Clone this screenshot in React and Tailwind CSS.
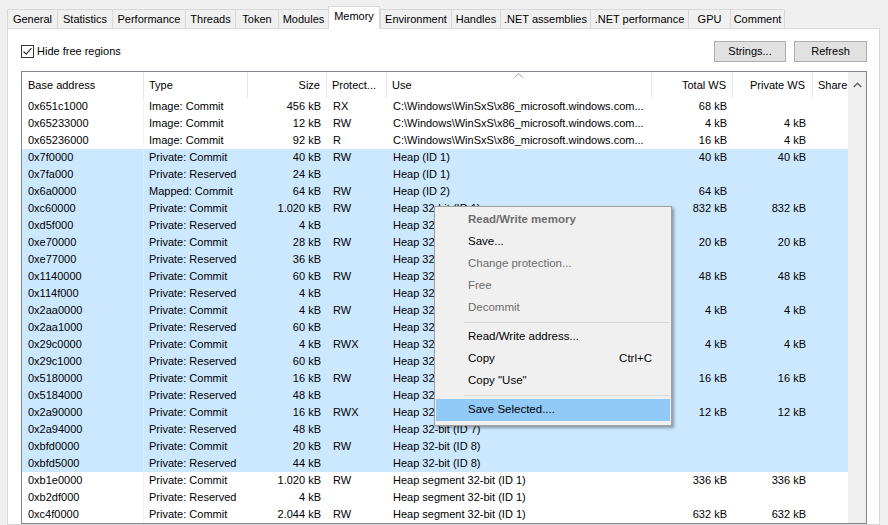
import React from 'react';

const tabs = [
  ['General', 50], ['Statistics', 55], ['Performance', 73], ['Threads', 50], ['Token', 43],
  ['Modules', 50], ['Memory', 52], ['Environment', 71], ['Handles', 49], ['.NET assemblies', 90],
  ['.NET performance', 98], ['GPU', 42], ['Comment', 55],
];

const winsxs = 'C:\\Windows\\WinSxS\\x86_microsoft.windows.com...';

// address, type, size, protection, use, total ws, private ws
const rows = [
  ['0x651c1000', 'Image: Commit', '456 kB', 'RX', winsxs, '68 kB', ''],
  ['0x65233000', 'Image: Commit', '12 kB', 'RW', winsxs, '4 kB', '4 kB'],
  ['0x65236000', 'Image: Commit', '92 kB', 'R', winsxs, '16 kB', '4 kB'],
  ['0x7f0000', 'Private: Commit', '40 kB', 'RW', 'Heap (ID 1)', '40 kB', '40 kB'],
  ['0x7fa000', 'Private: Reserved', '24 kB', '', 'Heap (ID 1)', '', ''],
  ['0x6a0000', 'Mapped: Commit', '64 kB', 'RW', 'Heap (ID 2)', '64 kB', ''],
  ['0xc60000', 'Private: Commit', '1.020 kB', 'RW', 'Heap 32-bit (ID 1)', '832 kB', '832 kB'],
  ['0xd5f000', 'Private: Reserved', '4 kB', '', 'Heap 32-bit (ID 1)', '', ''],
  ['0xe70000', 'Private: Commit', '28 kB', 'RW', 'Heap 32-bit (ID 2)', '20 kB', '20 kB'],
  ['0xe77000', 'Private: Reserved', '36 kB', '', 'Heap 32-bit (ID 2)', '', ''],
  ['0x1140000', 'Private: Commit', '60 kB', 'RW', 'Heap 32-bit (ID 3)', '48 kB', '48 kB'],
  ['0x114f000', 'Private: Reserved', '4 kB', '', 'Heap 32-bit (ID 3)', '', ''],
  ['0x2aa0000', 'Private: Commit', '4 kB', 'RW', 'Heap 32-bit (ID 4)', '4 kB', '4 kB'],
  ['0x2aa1000', 'Private: Reserved', '60 kB', '', 'Heap 32-bit (ID 4)', '', ''],
  ['0x29c0000', 'Private: Commit', '4 kB', 'RWX', 'Heap 32-bit (ID 5)', '4 kB', '4 kB'],
  ['0x29c1000', 'Private: Reserved', '60 kB', '', 'Heap 32-bit (ID 5)', '', ''],
  ['0x5180000', 'Private: Commit', '16 kB', 'RW', 'Heap 32-bit (ID 6)', '16 kB', '16 kB'],
  ['0x5184000', 'Private: Reserved', '48 kB', '', 'Heap 32-bit (ID 6)', '', ''],
  ['0x2a90000', 'Private: Commit', '16 kB', 'RWX', 'Heap 32-bit (ID 7)', '12 kB', '12 kB'],
  ['0x2a94000', 'Private: Reserved', '48 kB', '', 'Heap 32-bit (ID 7)', '', ''],
  ['0xbfd0000', 'Private: Commit', '20 kB', 'RW', 'Heap 32-bit (ID 8)', '', ''],
  ['0xbfd5000', 'Private: Reserved', '44 kB', '', 'Heap 32-bit (ID 8)', '', ''],
  ['0xb1e0000', 'Private: Commit', '1.020 kB', 'RW', 'Heap segment 32-bit (ID 1)', '336 kB', '336 kB'],
  ['0xb2df000', 'Private: Reserved', '4 kB', '', 'Heap segment 32-bit (ID 1)', '', ''],
  ['0xc4f0000', 'Private: Commit', '2.044 kB', 'RW', 'Heap segment 32-bit (ID 1)', '632 kB', '632 kB'],
];

const MenuItem = ({ label, shortcut, disabled, bold, active }) => (
  <div className={`mx-[1px] h-[22px] flex items-center pl-[32px] pr-[18px] ${active ? 'bg-[#91c9f7]' : ''}`}>
    <span className={`flex-1 ${disabled || bold ? 'text-[#6d6d6d]' : 'text-black'} ${bold ? 'font-bold' : ''}`}>{label}</span>
    {shortcut && <span className="text-black">{shortcut}</span>}
  </div>
);

const Sep = () => (
  <div className="h-[7px] flex items-center pl-[29px] pr-[2px]">
    <div className="h-px w-full bg-[#d7d7d7]"></div>
  </div>
);

export default function App() {
  return (
    <div className="w-[888px] h-[525px] bg-[#f0f0f0] overflow-hidden relative flex flex-col font-['Liberation_Sans',Arial,sans-serif] text-[11px] text-black">
      {/* tabs */}
      <div className="h-[28px] flex items-end pl-[7px] shrink-0">
        {tabs.map(([name, w], i) => {
          const sel = name === 'Memory';
          return (
            <div
              key={name}
              style={{ width: w }}
              className={`flex items-center justify-center border-t border-l border-[#d9d9d9] ${i === tabs.length - 1 ? 'border-r' : ''} ${sel ? 'h-[23px] -mb-px bg-white border-r relative z-10 pb-[3px]' : 'h-[19px] bg-[#f0f0f0]'}`}
            >
              {name}
            </div>
          );
        })}
      </div>

      {/* panel */}
      <div className="ml-[7px] w-[873px] flex-1 bg-white border border-[#d9d9d9] pt-[12px] pl-[13px] pr-[12px] flex flex-col min-h-0">
        <div className="h-[21px] flex items-center justify-between shrink-0">
          <label className="flex items-center gap-[3px]">
            <span className="w-[13px] h-[13px] border border-[#333333] bg-white flex items-center justify-center">
              <svg width="11" height="11" viewBox="0 0 11 11">
                <path d="M1.5 5.5 L4.2 8.2 L9.5 2.2" fill="none" stroke="#333333" strokeWidth="1.2" />
              </svg>
            </span>
            <span>Hide free regions</span>
          </label>
          <div className="flex gap-[8px]">
            <button className="w-[72px] h-[21px] bg-[#e1e1e1] border border-[#adadad]">Strings...</button>
            <button className="w-[73px] h-[21px] bg-[#e1e1e1] border border-[#adadad]">Refresh</button>
          </div>
        </div>

        {/* list view */}
        <div className="mt-[9px] border border-[#828790] flex flex-1 min-h-0 overflow-hidden">
          <div className="w-[826px] flex flex-col">
            <div className="h-[26px] flex shrink-0 relative">
              <div className="w-[122px] pl-[6px] flex items-center border-r border-[#e5e5e5]">Base address</div>
              <div className="w-[104px] pl-[5px] flex items-center border-r border-[#e5e5e5]">Type</div>
              <div className="w-[79px] pr-[6px] flex items-center justify-end border-r border-[#e5e5e5]">Size</div>
              <div className="w-[60px] pl-[5px] flex items-center border-r border-[#e5e5e5]">Protect...</div>
              <div className="w-[265px] pl-[5px] flex items-center border-r border-[#e5e5e5] relative">
                Use
                <svg className="absolute left-[127px] top-[1px]" width="9" height="5" viewBox="0 0 9 5">
                  <path d="M0.5 4.5 L4.5 0.8 L8.5 4.5" fill="none" stroke="#9a9a9a" strokeWidth="1" />
                </svg>
              </div>
              <div className="w-[81px] pr-[6px] flex items-center justify-end border-r border-[#e5e5e5]">Total WS</div>
              <div className="w-[80px] pr-[7px] flex items-center justify-end border-r border-[#e5e5e5]">Private WS</div>
              <div className="w-[35px] pl-[5px] flex items-center overflow-hidden whitespace-nowrap">Share</div>
            </div>
            {rows.map((r, i) => {
              const sel = i >= 3 && i <= 21;
              return (
                <div key={i} className={`h-[17px] flex shrink-0 whitespace-nowrap ${sel ? 'bg-[#cce8ff]' : ''}`}>
                  <div className={`w-[122px] pl-[6px] leading-[17px] border-r ${sel ? 'border-[#d9eeff]' : 'border-[#f3f3f3]'}`}>{r[0]}</div>
                  <div className="w-[104px] pl-[5px] leading-[17px]">{r[1]}</div>
                  <div className="w-[79px] pr-[6px] leading-[17px] text-right">{r[2]}</div>
                  <div className="w-[60px] pl-[6px] leading-[17px]">{r[3]}</div>
                  <div className="w-[265px] pl-[6px] leading-[17px] overflow-hidden">{r[4]}</div>
                  <div className="w-[81px] pr-[6px] leading-[17px] text-right">{r[5]}</div>
                  <div className="w-[80px] pr-[7px] leading-[17px] text-right">{r[6]}</div>
                  <div className="w-[35px]"></div>
                </div>
              );
            })}
          </div>
          {/* scrollbar */}
          <div className="w-[18px] bg-[#f0f0f0] flex flex-col items-center">
            <div className="h-[17px] w-full flex items-center justify-center mt-[4px]">
              <svg width="9" height="6" viewBox="0 0 9 6">
                <path d="M0.8 5 L4.5 1.2 L8.2 5" fill="none" stroke="#606060" strokeWidth="1.3" />
              </svg>
            </div>
          </div>
        </div>
      </div>

      {/* context menu */}
      <div className="absolute left-[434px] top-[206px] w-[238px] bg-[#f0f0f0] border border-[#a0a0a0] pt-[2px] pb-[1px] shadow-[2px_2px_3px_rgba(0,0,0,0.35)] text-[11.5px]">
        <MenuItem label="Read/Write memory" bold />
        <MenuItem label="Save..." />
        <MenuItem label="Change protection..." disabled />
        <MenuItem label="Free" disabled />
        <MenuItem label="Decommit" disabled />
        <Sep />
        <MenuItem label="Read/Write address..." />
        <MenuItem label="Copy" shortcut="Ctrl+C" />
        <MenuItem label={'Copy "Use"'} />
        <Sep />
        <MenuItem label="Save Selected...." active />
        <div className="h-[3px]"></div>
      </div>
    </div>
  );
}
